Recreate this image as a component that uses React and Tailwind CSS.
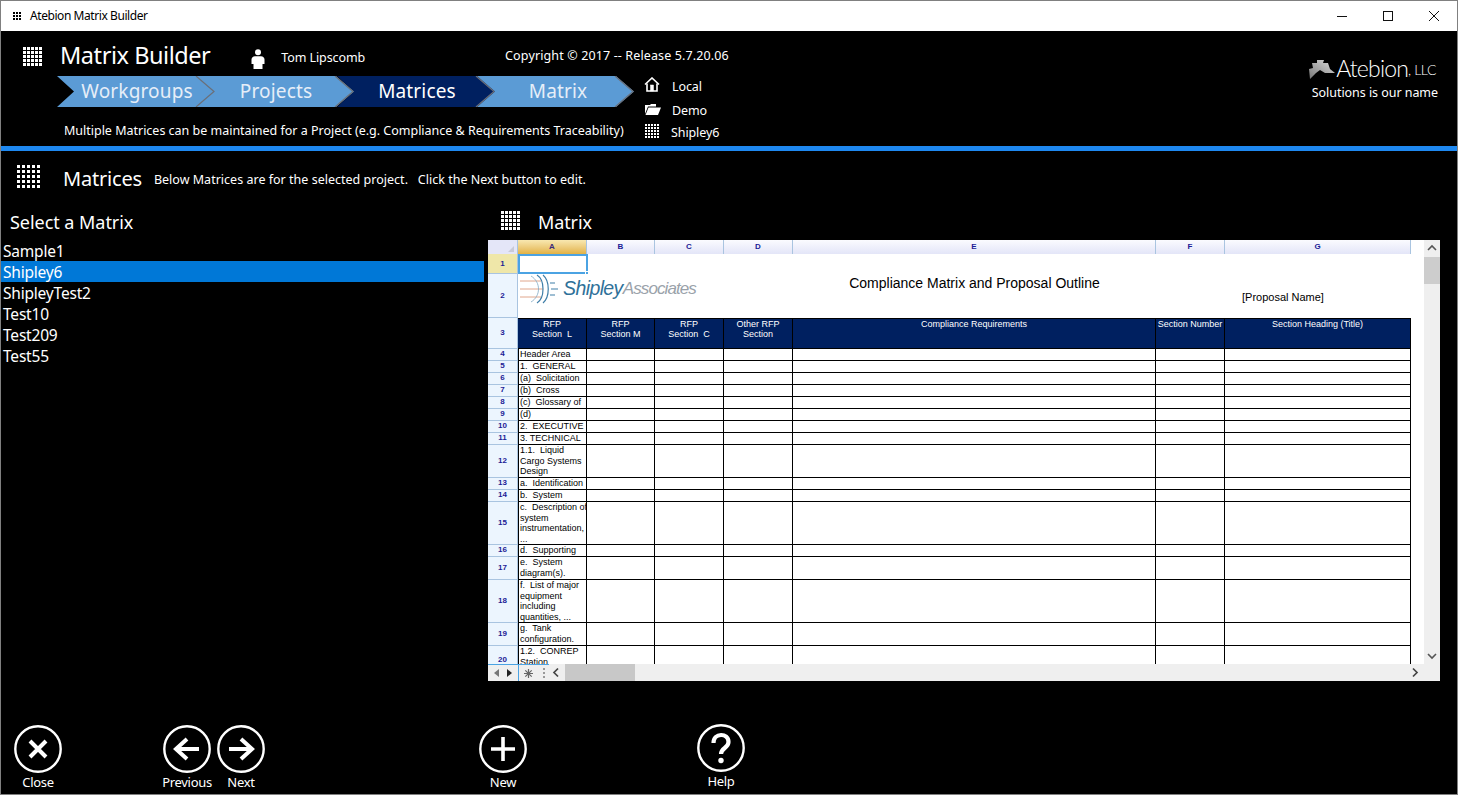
import React from 'react';

const segoe = "font-['Noto_Sans','Open_Sans',sans-serif]";
const arial = "font-['Liberation_Sans',Arial,sans-serif]";

const sheetCols = 'grid grid-cols-[30px_69px_68px_69px_69px_363px_69px_186px]';

const matrices = ['Sample1', 'Shipley6', 'ShipleyTest2', 'Test10', 'Test209', 'Test55'];

const columns = ['A', 'B', 'C', 'D', 'E', 'F', 'G'];

const rows = [
    { n: 4, h: 12, text: 'Header Area' },
    { n: 5, h: 12, text: '1.  GENERAL' },
    { n: 6, h: 12, text: '(a)  Solicitation' },
    { n: 7, h: 12, text: '(b)  Cross' },
    { n: 8, h: 12, text: '(c)  Glossary of' },
    { n: 9, h: 12, text: '(d)' },
    { n: 10, h: 12, text: '2.  EXECUTIVE' },
    { n: 11, h: 12, text: '3. TECHNICAL' },
    { n: 12, h: 33, text: '1.1.  Liquid\nCargo Systems\nDesign' },
    { n: 13, h: 12, text: 'a.  Identification' },
    { n: 14, h: 12, text: 'b.  System' },
    { n: 15, h: 43, text: 'c.  Description of\nsystem\ninstrumentation,\n...' },
    { n: 16, h: 12, text: 'd.  Supporting' },
    { n: 17, h: 23, text: 'e.  System\ndiagram(s).' },
    { n: 18, h: 43, text: 'f.  List of major\nequipment\nincluding\nquantities, ...' },
    { n: 19, h: 23, text: 'g.  Tank\nconfiguration.' },
    { n: 20, h: 29, text: '1.2.  CONREP\nStation' },
];

const GridIcon = ({ step = 4, dot = 3, count = 5, className = '' }) => {
    const size = step * (count - 1) + dot;
    const dots = [];
    for (let r = 0; r < count; r++) {
        for (let c = 0; c < count; c++) {
            dots.push(<rect key={`${r}-${c}`} x={c * step} y={r * step} width={dot} height={dot} fill="currentColor" />);
        }
    }
    return <svg width={size} height={size} viewBox={`0 0 ${size} ${size}`} className={`shrink-0 ${className}`}>{dots}</svg>;
};

const Chevron = ({ label, active, className = '', labelClass = 'pl-[2px]' }) => (
    <div className={`relative w-[158px] h-[31px] flex items-center justify-center ${className}`}>
        <svg width="158" height="31" viewBox="0 0 158 31" className="absolute inset-0">
            <polygon points="0,0 140,0 158,15.5 140,31 0,31 17,15.5" fill={active ? '#002060' : '#5b9bd5'} />
            <polyline points="139,0 157,15.5 139,31" fill="none" stroke="#6b6f78" strokeWidth="1.2" />
        </svg>
        <span className={`relative text-[19px] tracking-[0.15px] ${labelClass} ${active ? 'text-white' : 'text-[#e6eef8]'}`}>{label}</span>
    </div>
);

const CircleButton = ({ label, className = '', children }) => (
    <div className={`w-[48px] flex flex-col items-center ${className}`}>
        <svg width="48" height="48" viewBox="0 0 48 48">
            <circle cx="24" cy="24" r="22.7" fill="none" stroke="#fff" strokeWidth="2.4" />
            {children}
        </svg>
        <span className="text-[13px] leading-[18px] tracking-[-0.3px] text-white whitespace-nowrap">{label}</span>
    </div>
);

const ColumnHeader = ({ label, active }) => (
    <div className={`flex items-center justify-center border-r border-[#a9c4e0] text-[8px] font-bold ${active ? 'bg-gradient-to-b from-[#f8e8b0] to-[#e2b244] text-[#3a2a7a]' : 'bg-gradient-to-b from-[#fbfbff] to-[#e3e5f8] text-[#1c1c96]'}`}>
        {label}
    </div>
);

const RowHeader = ({ n, active, className = '' }) => (
    <div className={`flex items-center justify-center border-b border-r border-[#a9c4e0] text-[8px] leading-[8px] font-bold text-[#1c1c96] overflow-hidden ${active ? 'bg-[#efe7a9]' : 'bg-[#ecf5fe]'} ${className}`}>
        {n}
    </div>
);

const ShipleyLogo = () => (
    <div className="flex items-center h-[30px] whitespace-nowrap">
        <svg width="44" height="30" viewBox="0 0 44 30" className="shrink-0">
            <path d="M1 7 H22 M1 15 H24 M1 23 H22" stroke="#e0a68c" strokeWidth="1" fill="none" />
            <path d="M18 1 C26 6 26 24 18 29 M24 1 C31 7 31 23 24 29" stroke="#3f7ea8" strokeWidth="1.2" fill="none" />
            <path d="M12 2 C22 8 22 22 12 28" stroke="#7fa8c4" strokeWidth="0.8" fill="none" />
            <path d="M31 9 L36 9 M32 15 H39 M31 21 L36 21" stroke="#3f7ea8" strokeWidth="1.2" />
        </svg>
        <span className={`${arial} italic text-[19.5px] tracking-[-0.6px] text-[#2f7199]`}>Shipley</span>
        <span className={`${arial} italic text-[17px] tracking-[-0.9px] text-[#9aa2aa]`}>Associates</span>
    </div>
);

const Sheet = () => (
    <div className={`w-[952px] h-[441px] flex flex-col bg-white ${arial} text-black`}>
        <div className="flex h-[424px]">
            <div className="w-[923px] shrink-0 h-[424px] overflow-hidden">
                <div className={`${sheetCols} h-[14px]`}>
                    <div className="relative bg-[#e4e6f8] border-r border-[#a9c4e0]">
                        <div className="absolute right-[3px] bottom-[2px] w-0 h-0 border-l-[6px] border-l-transparent border-b-[6px] border-b-[#c8cad8]" />
                    </div>
                    {columns.map((c) => <ColumnHeader key={c} label={c} active={c === 'A'} />)}
                </div>
                <div className={`${sheetCols} h-[20px]`}>
                    <RowHeader n={1} active />
                    <div className="relative border-2 border-[#4ba3e3] -mr-[1px] z-10">
                        <div className="absolute -right-[3px] -bottom-[3px] w-[4px] h-[4px] bg-[#4ba3e3] border border-white" />
                    </div>
                </div>
                <div className={`${sheetCols} h-[44px]`}>
                    <RowHeader n={2} />
                    <div className="w-[180px] pl-[1px]"><ShipleyLogo /></div>
                    <div />
                    <div />
                    <div />
                    <div className="text-center text-[14px] leading-[18px]">Compliance Matrix and Proposal Outline</div>
                    <div />
                    <div className="pl-[17px] pt-[17px] text-[11px] leading-[13px] whitespace-nowrap">[Proposal Name]</div>
                </div>
                <div className={`${sheetCols} h-[31px]`}>
                    <RowHeader n={3} />
                    {['RFP\nSection  L', 'RFP\nSection M', 'RFP\nSection  C', 'Other RFP\nSection', 'Compliance Requirements', 'Section Number', 'Section Heading (Title)'].map((t) => (
                        <div key={t} className="bg-[#002060] border-t border-r border-b border-black first-of-type:border-l text-white text-center text-[9px] leading-[10px] whitespace-pre overflow-hidden">
                            {t}
                        </div>
                    ))}
                </div>
                {rows.map((row) => (
                    <div key={row.n} className={`${sheetCols} grid-rows-[minmax(0,1fr)]`} style={{ height: row.h }}>
                        <RowHeader n={row.n} className="pb-[1px]" />
                        <div className="border-l border-r border-b border-black pl-[1px] text-[9px] leading-[10.6px] whitespace-pre overflow-hidden">{row.text}</div>
                        {columns.slice(1).map((c) => <div key={c} className="border-r border-b border-black" />)}
                    </div>
                ))}
            </div>
            <div className="ml-[13px] w-[16px] bg-[#efefef] flex flex-col items-center">
                <svg width="16" height="17" viewBox="0 0 16 17" className="shrink-0"><path d="M4 10 L8 6 L12 10" fill="none" stroke="#555" strokeWidth="1.6" /></svg>
                <div className="w-[16px] h-[27px] bg-[#cdcdcd]" />
                <div className="flex-1" />
                <svg width="16" height="17" viewBox="0 0 16 17" className="shrink-0"><path d="M4 7 L8 11 L12 7" fill="none" stroke="#555" strokeWidth="1.6" /></svg>
            </div>
        </div>
        <div className="flex items-stretch h-[17px] bg-[#efefef]">
            <div className="w-[31px] flex items-center justify-center gap-[8px] border-t border-r border-[#4ba3e3]">
                <span className="w-0 h-0 border-y-[4px] border-y-transparent border-r-[5px] border-r-[#777]" />
                <span className="w-0 h-0 border-y-[4px] border-y-transparent border-l-[5px] border-l-[#222]" />
            </div>
            <div className="w-[20px] border-t border-[#4ba3e3] flex items-center pl-[4px]">
                <svg width="11" height="11" viewBox="0 0 11 11"><path d="M5.5 1 V10 M1 5.5 H10 M2.3 2.3 L8.7 8.7 M8.7 2.3 L2.3 8.7" stroke="#666" strokeWidth="1.2" /></svg>
            </div>
            <div className="w-[10px] border-t border-[#4ba3e3] flex flex-col items-center justify-center gap-[2px]">
                <span className="w-[2px] h-[2px] bg-[#999]" />
                <span className="w-[2px] h-[2px] bg-[#999]" />
                <span className="w-[2px] h-[2px] bg-[#999]" />
            </div>
            <svg width="14" height="17" viewBox="0 0 14 17" className="shrink-0"><path d="M9 4.5 L5 8.5 L9 12.5" fill="none" stroke="#444" strokeWidth="1.7" /></svg>
            <div className="ml-[2px] w-[70px] bg-[#c8c8c8]" />
            <div className="flex-1" />
            <svg width="14" height="17" viewBox="0 0 14 17" className="shrink-0 mr-[18px]"><path d="M5 4.5 L9 8.5 L5 12.5" fill="none" stroke="#444" strokeWidth="1.7" /></svg>
        </div>
    </div>
);

const App = () => {
    return (
        <div className={`w-[1458px] h-[795px] flex flex-col overflow-hidden bg-black border border-[#808080] text-white ${segoe}`}>
            {/* Title bar */}
            <div className="h-[30px] shrink-0 bg-white text-black flex items-center">
                <GridIcon step={3} dot={2} count={3} className="ml-[12px]" />
                <span className="ml-[9px] text-[12px] tracking-[-0.43px]">Atebion Matrix Builder</span>
                <div className="ml-auto flex items-center">
                    <svg width="46" height="30" viewBox="0 0 46 30"><path d="M18 15.5 H28" stroke="#111" strokeWidth="1" /></svg>
                    <svg width="46" height="30" viewBox="0 0 46 30"><rect x="18.5" y="10.5" width="9" height="9" fill="none" stroke="#111" strokeWidth="1" /></svg>
                    <svg width="46" height="30" viewBox="0 0 46 30"><path d="M18 10 L28 20 M28 10 L18 20" stroke="#111" strokeWidth="1" /></svg>
                </div>
            </div>

            {/* App header */}
            <div className="h-[115px] shrink-0 flex">
                <div className="w-[643px] shrink-0">
                    <div className="flex items-center h-[45px] w-[760px]">
                        <GridIcon className="ml-[22px] mt-[6px]" />
                        <span className="ml-[18px] mt-[4px] text-[23.5px] tracking-[-0.45px]">Matrix Builder</span>
                        <svg width="16" height="20" viewBox="0 0 16 20" className="ml-[40px] mt-[10px]" fill="#fff">
                            <circle cx="8" cy="3.2" r="3" />
                            <path d="M5 7.2 H11 C13 7.2 14.5 8.6 14.5 10.5 V15 H12.5 V20 H3.5 V15 H1.5 V10.5 C1.5 8.6 3 7.2 5 7.2 Z" />
                        </svg>
                        <span className="ml-[15px] mt-[10px] text-[12.5px] tracking-[-0.1px] whitespace-nowrap">Tom Lipscomb</span>
                        <span className="ml-[140px] mt-[6px] text-[12.5px] tracking-[0.13px] whitespace-nowrap">Copyright © 2017 -- Release 5.7.20.06</span>
                    </div>
                    <div className="flex ml-[56px]">
                        <Chevron label="Workgroups" className="z-30" />
                        <Chevron label="Projects" className="-ml-[19px] z-20" />
                        <Chevron label="Matrices" active className="-ml-[17px] z-10" />
                        <Chevron label="Matrix" labelClass="pl-[6px]" className="-ml-[19px]" />
                    </div>
                    <div className="ml-[63px] mt-[15px] text-[12.5px] leading-[18px] tracking-[-0.01px] whitespace-nowrap">
                        Multiple Matrices can be maintained for a Project (e.g. Compliance &amp; Requirements Traceability)
                    </div>
                </div>
                <div className="pt-[44px] text-[12.5px] tracking-[-0.1px]">
                    <div className="flex items-center h-[24px]">
                        <svg width="16" height="15" viewBox="0 0 16 15" className="mt-[-5px]" fill="none" stroke="#fff">
                            <path d="M1 7.5 L8 1 L15 7.5" strokeWidth="1.6" />
                            <path d="M3 6.5 V14 H13 V6.5" strokeWidth="1.6" />
                            <rect x="6.5" y="8" width="3" height="6" fill="#fff" strokeWidth="0.5" />
                        </svg>
                        <span className="ml-[12px]">Local</span>
                    </div>
                    <div className="flex items-center h-[24px]">
                        <svg width="17" height="12" viewBox="0 0 17 12" className="mt-[-5px]" fill="#fff">
                            <path d="M1 2 H6 L7 1 H12 V3.5 H4 L1 11 Z" />
                            <path d="M4.5 4.5 H17 L14 12 H1.5 Z" />
                        </svg>
                        <span className="ml-[11px]">Demo</span>
                    </div>
                    <div className="flex items-center h-[20px]">
                        <GridIcon step={3} dot={2} className="ml-[1px] mt-[-5px]" />
                        <span className="ml-[12px]">Shipley6</span>
                    </div>
                </div>
                <div className="ml-auto pr-[19px] pt-[25px] flex flex-col items-end">
                    <div className="flex items-end h-[24px] mr-[2px]">
                        <svg width="27" height="20" viewBox="0 0 27 20" className="mb-[1px]">
                            <defs>
                                <linearGradient id="piece" x1="0" y1="1" x2="1" y2="0">
                                    <stop offset="0" stopColor="#777" />
                                    <stop offset="1" stopColor="#ddd" />
                                </linearGradient>
                            </defs>
                            <path d="M4 4 L9 4 L9 1 L16 1 L15 4 L20 4 L22 10 L27 14 L17 14 L12 11 L8 14 L2 20 L1 10 L5 9 Z" fill="url(#piece)" />
                        </svg>
                        <span className="ml-[1px] font-['Lato',sans-serif] font-light text-[23px] leading-[24px] tracking-[-0.8px]">Atebion</span>
                        <span className="font-['Lato',sans-serif] font-light text-[14px] leading-[20px] tracking-[-0.4px]">, LLC</span>
                    </div>
                    <div className="mt-[4px] text-[12.5px] leading-[18px] tracking-[-0.05px]">Solutions is our name</div>
                </div>
            </div>

            <div className="h-[5px] shrink-0 bg-[#1e88f0]" />

            {/* Page heading */}
            <div className="h-[50px] shrink-0 flex items-center">
                <GridIcon step={5} dot={3} className="ml-[16px]" />
                <span className="ml-[23px] mt-[6px] text-[20px] tracking-[-0.2px]">Matrices</span>
                <span className="ml-[12px] mt-[8px] text-[12.5px] tracking-[0.015px] whitespace-pre">Below Matrices are for the selected project.   Click the Next button to edit.</span>
            </div>

            {/* Content */}
            <div className="h-[524px] shrink-0 flex">
                <div className="w-[483px] shrink-0">
                    <div className="h-[39px] pl-[9px] pt-[8px] text-[18px] leading-[26px] tracking-[-0.04px]">Select a Matrix</div>
                    {matrices.map((m) => (
                        <div key={m} className={`h-[21px] pl-[2px] pt-[1px] text-[15.5px] leading-[20px] tracking-[-0.2px] ${m === 'Shipley6' ? 'bg-[#0078d7]' : ''}`}>{m}</div>
                    ))}
                </div>
                <div className="ml-[4px]">
                    <div className="h-[39px] flex items-start pt-[8px]">
                        <GridIcon className="ml-[13px] mt-[2px]" />
                        <span className="ml-[18px] text-[18px] leading-[26px] tracking-[-0.1px]">Matrix</span>
                    </div>
                    <Sheet />
                </div>
            </div>

            {/* Bottom toolbar */}
            <div className="flex">
                <CircleButton label="Close" className="ml-[13px]">
                    <path d="M16 16 L32 32 M32 16 L16 32" stroke="#fff" strokeWidth="4" />
                </CircleButton>
                <CircleButton label="Previous" className="ml-[101px]">
                    <path d="M36 24 H14 M24 14 L13 24 L24 34" stroke="#fff" strokeWidth="4" fill="none" />
                </CircleButton>
                <CircleButton label="Next" className="ml-[6px]">
                    <path d="M12 24 H34 M24 14 L35 24 L24 34" stroke="#fff" strokeWidth="4" fill="none" />
                </CircleButton>
                <CircleButton label="New" className="ml-[214px]">
                    <path d="M24 12 V36 M12 24 H36" stroke="#fff" strokeWidth="3.6" />
                </CircleButton>
                <CircleButton label="Help" className="ml-[170px] -mt-[1px]">
                    <path d="M16.5 19 C16.5 8.5 31.5 8.5 31.5 18 C31.5 24 24 24 24 30" stroke="#fff" strokeWidth="4.2" fill="none" />
                    <circle cx="24" cy="36.5" r="2.7" fill="#fff" />
                </CircleButton>
            </div>
        </div>
    );
};

export default App;
